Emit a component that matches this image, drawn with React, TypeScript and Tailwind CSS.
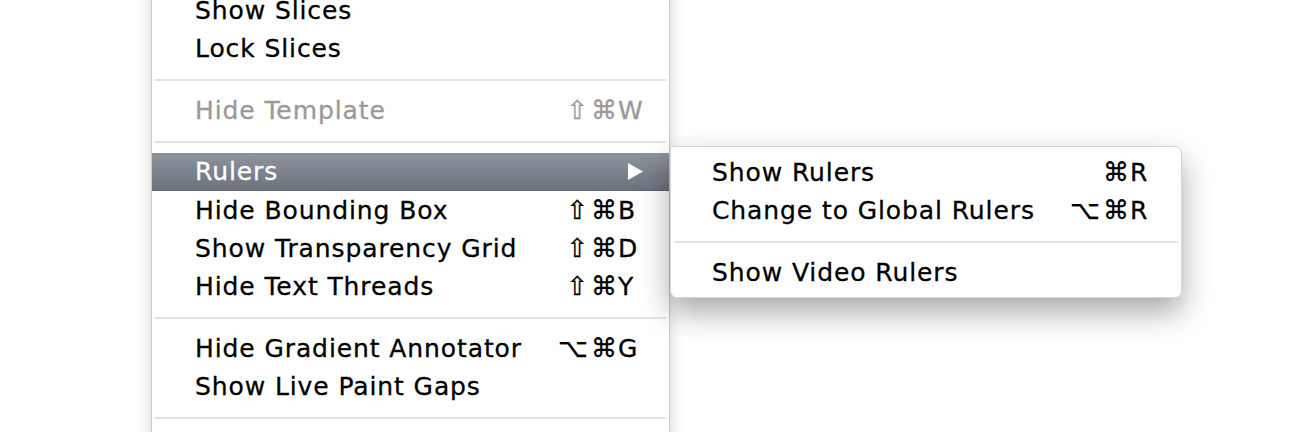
import { ReactNode } from "react";

type Item = {
  label: string;
  mods?: string;
  keyChar?: string;
  disabled?: boolean;
  active?: boolean;
  submenu?: boolean;
};

const mainSections: Item[][] = [
  [{ label: "Show Slices" }, { label: "Lock Slices" }],
  [{ label: "Hide Template", mods: "⇧⌘", keyChar: "W", disabled: true }],
  [
    { label: "Rulers", active: true, submenu: true },
    { label: "Hide Bounding Box", mods: "⇧⌘", keyChar: "B" },
    { label: "Show Transparency Grid", mods: "⇧⌘", keyChar: "D" },
    { label: "Hide Text Threads", mods: "⇧⌘", keyChar: "Y" },
  ],
  [
    { label: "Hide Gradient Annotator", mods: "⌥⌘", keyChar: "G" },
    { label: "Show Live Paint Gaps" },
  ],
];

const subSections: Item[][] = [
  [
    { label: "Show Rulers", mods: "⌘", keyChar: "R" },
    { label: "Change to Global Rulers", mods: "⌥⌘", keyChar: "R" },
  ],
  [{ label: "Show Video Rulers" }],
];

function Separator() {
  return <div className="mx-[3px] mt-[12px] mb-[10px] h-[2px] bg-[#e3e3e3]" />;
}

function Row({ item, pl }: { item: Item; pl: string }) {
  const color = item.active
    ? "text-white"
    : item.disabled
      ? "text-[#9c9898]"
      : "text-black";
  let right: ReactNode = null;
  if (item.submenu) {
    right = (
      <svg width="15" height="17" viewBox="0 0 15 17" className="mr-[26px]">
        <path d="M0 0 L15 8.5 L0 17 Z" fill="#ffffff" />
      </svg>
    );
  } else if (item.keyChar) {
    right = (
      <div className="flex items-center">
        <span className="mr-[-2px] text-right text-[26px] tracking-[3px]">{item.mods}</span>
        <span className="w-[51px]">{item.keyChar}</span>
      </div>
    );
  }
  return (
    <div
      className={`flex h-[38px] items-center justify-between ${pl} ${color} ${
        item.active
          ? "border-b border-[#5c636c] bg-gradient-to-b from-[#8e949c] to-[#6c737d]"
          : ""
      }`}
    >
      <span>{item.label}</span>
      {right}
    </div>
  );
}

export default function App() {
  return (
    <div
      className="relative h-[432px] w-[1298px] overflow-hidden bg-white text-[25px] leading-none tracking-[0.9px] [-webkit-text-stroke:0.3px]"
      style={{ fontFamily: '"DejaVu Sans", sans-serif' }}
    >
      <div className="-mt-[9px] ml-[151px] w-[519px] border-x border-[#c9c9c9] bg-white pb-[40px] shadow-[0_0_14px_rgba(0,0,0,0.18)]">
        {mainSections.map((section, si) => (
          <div key={si}>
            {section.map((item) => (
              <Row key={item.label} item={item} pl="pl-[43px]" />
            ))}
            <Separator />
          </div>
        ))}
      </div>

      <div className="absolute left-[670px] top-[146px] w-[512px] rounded-r-[7px] rounded-bl-[7px] border border-[#d6d6d6] bg-white py-[6px] shadow-[0_14px_30px_rgba(0,0,0,0.35)]">
        {subSections.map((section, si) => (
          <div key={si}>
            {si > 0 && <Separator />}
            {section.map((item) => (
              <Row key={item.label} item={item} pl="pl-[41px]" />
            ))}
          </div>
        ))}
      </div>
    </div>
  );
}
